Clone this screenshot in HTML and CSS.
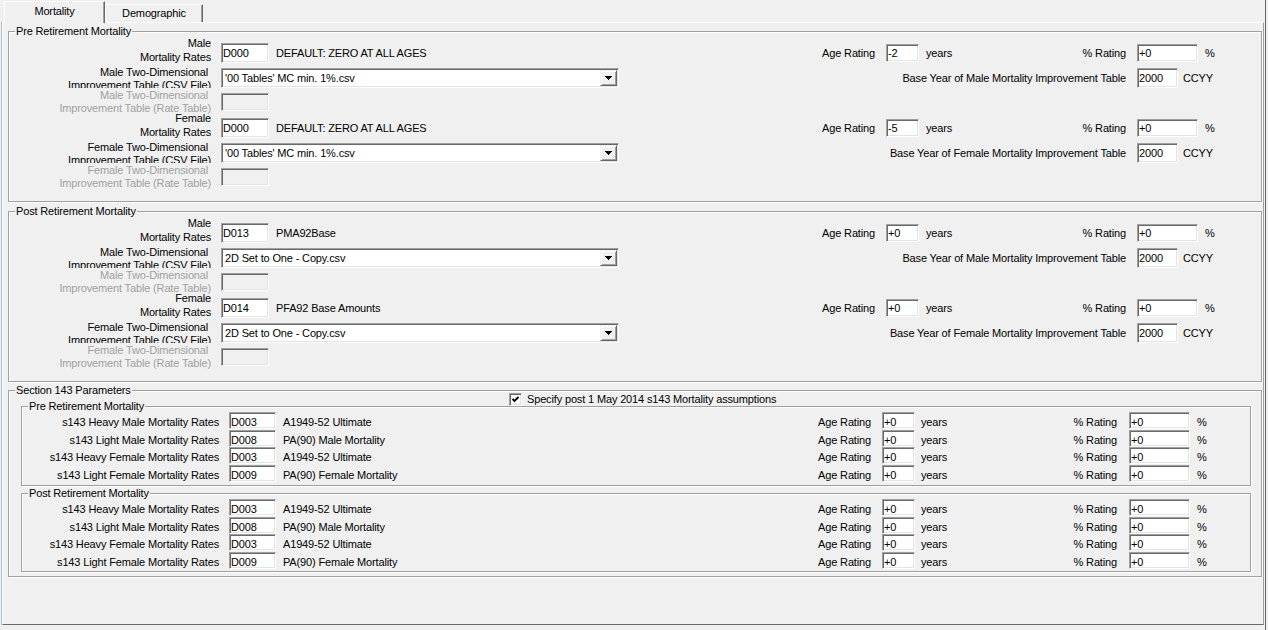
FILE: index.html
```html
<!DOCTYPE html>
<html>
<head>
<meta charset="utf-8">
<title>Mortality</title>
<link rel="stylesheet" href="styles.css">
</head>
<body>
<div class="window">
  <div class="tabs">
    <div class="tab active">Mortality</div>
    <div class="tab">Demographic</div>
  </div>
  <div class="panel">

    <div class="group g-pre">
      <span class="legend">Pre Retirement Mortality</span>
      <div class="row">
        <div class="lbl lbl-mr">Male<br>Mortality Rates</div>
        <div class="field code">D000</div>
        <div class="desc">DEFAULT: ZERO AT ALL AGES</div>
        <div class="cluster">
          <span class="c-age">Age Rating</span>
          <span class="field f-age">-2</span>
          <span class="c-years">years</span>
          <span class="c-pct">% Rating</span>
          <span class="field f-pct">+0</span>
          <span class="c-unit">%</span>
        </div>
      </div>
      <div class="row">
        <div class="lbl lbl-csv">Male Two-Dimensional&nbsp;<br>Improvement Table (CSV File)</div>
        <div class="combo"><span class="combo-text">'00 Tables' MC min. 1%.csv</span><span class="combo-btn"><svg width="7" height="4" viewBox="0 0 7 4" shape-rendering="crispEdges"><path d="M0 0h7v1h-1v1h-1v1h-1v1h-1v-1h-1v-1h-1v-1h-1z" fill="#000"/></svg></span></div>
        <div class="cluster">
          <span class="c-base">Base Year of Male Mortality Improvement Table</span>
          <span class="field f-year">2000</span>
          <span class="c-ccyy">CCYY</span>
        </div>
      </div>
      <div class="row">
        <div class="lbl lbl-rate">Male Two-Dimensional&nbsp;<br>Improvement Table (Rate Table)</div>
        <div class="field disabled"></div>
      </div>
      <div class="row">
        <div class="lbl lbl-mr">Female<br>Mortality Rates</div>
        <div class="field code">D000</div>
        <div class="desc">DEFAULT: ZERO AT ALL AGES</div>
        <div class="cluster">
          <span class="c-age">Age Rating</span>
          <span class="field f-age">-5</span>
          <span class="c-years">years</span>
          <span class="c-pct">% Rating</span>
          <span class="field f-pct">+0</span>
          <span class="c-unit">%</span>
        </div>
      </div>
      <div class="row">
        <div class="lbl lbl-csv">Female Two-Dimensional&nbsp;<br>Improvement Table (CSV File)</div>
        <div class="combo"><span class="combo-text">'00 Tables' MC min. 1%.csv</span><span class="combo-btn"><svg width="7" height="4" viewBox="0 0 7 4" shape-rendering="crispEdges"><path d="M0 0h7v1h-1v1h-1v1h-1v1h-1v-1h-1v-1h-1v-1h-1z" fill="#000"/></svg></span></div>
        <div class="cluster">
          <span class="c-base">Base Year of Female Mortality Improvement Table</span>
          <span class="field f-year">2000</span>
          <span class="c-ccyy">CCYY</span>
        </div>
      </div>
      <div class="row">
        <div class="lbl lbl-rate">Female Two-Dimensional&nbsp;<br>Improvement Table (Rate Table)</div>
        <div class="field disabled"></div>
      </div>
    </div>

    <div class="group g-post">
      <span class="legend">Post Retirement Mortality</span>
      <div class="row">
        <div class="lbl lbl-mr">Male<br>Mortality Rates</div>
        <div class="field code">D013</div>
        <div class="desc">PMA92Base</div>
        <div class="cluster">
          <span class="c-age">Age Rating</span>
          <span class="field f-age">+0</span>
          <span class="c-years">years</span>
          <span class="c-pct">% Rating</span>
          <span class="field f-pct">+0</span>
          <span class="c-unit">%</span>
        </div>
      </div>
      <div class="row">
        <div class="lbl lbl-csv">Male Two-Dimensional&nbsp;<br>Improvement Table (CSV File)</div>
        <div class="combo"><span class="combo-text">2D Set to One - Copy.csv</span><span class="combo-btn"><svg width="7" height="4" viewBox="0 0 7 4" shape-rendering="crispEdges"><path d="M0 0h7v1h-1v1h-1v1h-1v1h-1v-1h-1v-1h-1v-1h-1z" fill="#000"/></svg></span></div>
        <div class="cluster">
          <span class="c-base">Base Year of Male Mortality Improvement Table</span>
          <span class="field f-year">2000</span>
          <span class="c-ccyy">CCYY</span>
        </div>
      </div>
      <div class="row">
        <div class="lbl lbl-rate">Male Two-Dimensional&nbsp;<br>Improvement Table (Rate Table)</div>
        <div class="field disabled"></div>
      </div>
      <div class="row">
        <div class="lbl lbl-mr">Female<br>Mortality Rates</div>
        <div class="field code">D014</div>
        <div class="desc">PFA92 Base Amounts</div>
        <div class="cluster">
          <span class="c-age">Age Rating</span>
          <span class="field f-age">+0</span>
          <span class="c-years">years</span>
          <span class="c-pct">% Rating</span>
          <span class="field f-pct">+0</span>
          <span class="c-unit">%</span>
        </div>
      </div>
      <div class="row">
        <div class="lbl lbl-csv">Female Two-Dimensional&nbsp;<br>Improvement Table (CSV File)</div>
        <div class="combo"><span class="combo-text">2D Set to One - Copy.csv</span><span class="combo-btn"><svg width="7" height="4" viewBox="0 0 7 4" shape-rendering="crispEdges"><path d="M0 0h7v1h-1v1h-1v1h-1v1h-1v-1h-1v-1h-1v-1h-1z" fill="#000"/></svg></span></div>
        <div class="cluster">
          <span class="c-base">Base Year of Female Mortality Improvement Table</span>
          <span class="field f-year">2000</span>
          <span class="c-ccyy">CCYY</span>
        </div>
      </div>
      <div class="row">
        <div class="lbl lbl-rate">Female Two-Dimensional&nbsp;<br>Improvement Table (Rate Table)</div>
        <div class="field disabled"></div>
      </div>
    </div>

    <div class="group g-s143">
      <span class="legend">Section 143 Parameters</span>
      <div class="chkrow">
        <span class="chk"><svg width="9" height="9" viewBox="0 0 9 9"><polyline points="1.5,4 3.5,6 7.5,2" fill="none" stroke="#000" stroke-width="1.8"/></svg></span>
        <span class="chk-text">Specify post 1 May 2014 s143 Mortality assumptions</span>
      </div>

      <div class="group inner i-pre">
        <span class="legend">Pre Retirement Mortality</span>
        <div class="irow">
          <div class="ilbl">s143 Heavy Male Mortality Rates</div>
          <div class="field icode">D003</div>
          <div class="idesc">A1949-52 Ultimate</div>
          <div class="icluster">
            <span class="c-age">Age Rating</span><span class="field f-age">+0</span><span class="c-years">years</span><span class="c-pct">% Rating</span><span class="field f-pct">+0</span><span class="c-unit">%</span>
          </div>
        </div>
        <div class="irow">
          <div class="ilbl">s143 Light Male Mortality Rates</div>
          <div class="field icode">D008</div>
          <div class="idesc">PA(90) Male Mortality</div>
          <div class="icluster">
            <span class="c-age">Age Rating</span><span class="field f-age">+0</span><span class="c-years">years</span><span class="c-pct">% Rating</span><span class="field f-pct">+0</span><span class="c-unit">%</span>
          </div>
        </div>
        <div class="irow">
          <div class="ilbl">s143 Heavy Female Mortality Rates</div>
          <div class="field icode">D003</div>
          <div class="idesc">A1949-52 Ultimate</div>
          <div class="icluster">
            <span class="c-age">Age Rating</span><span class="field f-age">+0</span><span class="c-years">years</span><span class="c-pct">% Rating</span><span class="field f-pct">+0</span><span class="c-unit">%</span>
          </div>
        </div>
        <div class="irow">
          <div class="ilbl">s143 Light Female Mortality Rates</div>
          <div class="field icode">D009</div>
          <div class="idesc">PA(90) Female Mortality</div>
          <div class="icluster">
            <span class="c-age">Age Rating</span><span class="field f-age">+0</span><span class="c-years">years</span><span class="c-pct">% Rating</span><span class="field f-pct">+0</span><span class="c-unit">%</span>
          </div>
        </div>
      </div>

      <div class="group inner i-post">
        <span class="legend">Post Retirement Mortality</span>
        <div class="irow">
          <div class="ilbl">s143 Heavy Male Mortality Rates</div>
          <div class="field icode">D003</div>
          <div class="idesc">A1949-52 Ultimate</div>
          <div class="icluster">
            <span class="c-age">Age Rating</span><span class="field f-age">+0</span><span class="c-years">years</span><span class="c-pct">% Rating</span><span class="field f-pct">+0</span><span class="c-unit">%</span>
          </div>
        </div>
        <div class="irow">
          <div class="ilbl">s143 Light Male Mortality Rates</div>
          <div class="field icode">D008</div>
          <div class="idesc">PA(90) Male Mortality</div>
          <div class="icluster">
            <span class="c-age">Age Rating</span><span class="field f-age">+0</span><span class="c-years">years</span><span class="c-pct">% Rating</span><span class="field f-pct">+0</span><span class="c-unit">%</span>
          </div>
        </div>
        <div class="irow">
          <div class="ilbl">s143 Heavy Female Mortality Rates</div>
          <div class="field icode">D003</div>
          <div class="idesc">A1949-52 Ultimate</div>
          <div class="icluster">
            <span class="c-age">Age Rating</span><span class="field f-age">+0</span><span class="c-years">years</span><span class="c-pct">% Rating</span><span class="field f-pct">+0</span><span class="c-unit">%</span>
          </div>
        </div>
        <div class="irow">
          <div class="ilbl">s143 Light Female Mortality Rates</div>
          <div class="field icode">D009</div>
          <div class="idesc">PA(90) Female Mortality</div>
          <div class="icluster">
            <span class="c-age">Age Rating</span><span class="field f-age">+0</span><span class="c-years">years</span><span class="c-pct">% Rating</span><span class="field f-pct">+0</span><span class="c-unit">%</span>
          </div>
        </div>
      </div>
    </div>

  </div>
</div>
</body>
</html>
```

FILE: styles.css
```css
html, body {
  margin: 0;
  padding: 0;
  background: #f0f0f0;
}
body {
  font-family: "Liberation Sans", Arial, sans-serif;
  font-size: 11px;
  letter-spacing: -0.15px;
  color: #000;
}
.window {
  width: 1266px;
  height: 630px;
  box-sizing: border-box;
  padding-left: 2px;
  border-right: 1px solid #696969;
  overflow: hidden;
}

/* Tabs */
.tabs {
  display: flex;
  align-items: flex-end;
  height: 22px;
  padding-left: 2px;
}
.tab {
  box-sizing: border-box;
  height: 18px;
  width: 98px;
  border-top: 1px solid #fff;
  border-left: 1px solid #fff;
  border-right: 1px solid #696969;
  box-shadow: inset -1px 0 0 #a0a0a0;
  text-align: center;
  line-height: 13px;
  padding-top: 2px;
  white-space: nowrap;
}
.tab.active {
  width: 101px;
  height: 22px;
  padding-top: 3px;
  position: relative;
  top: 1px;
  z-index: 1;
  background: #f0f0f0;
}

/* Panel */
.panel {
  box-sizing: border-box;
  width: 1262px;
  height: 603px;
  border-top: 1px solid #fff;
  border-left: 1px solid #fff;
  border-right: 1px solid #a0a0a0;
  border-bottom: 1px solid #696969;
  box-shadow: -1px 0 0 #aabbd0;
  padding-top: 8px;
}

/* Group boxes */
.group {
  position: relative;
  border: 1px solid #a0a0a0;
  box-shadow: inset 1px 1px 0 #fff, 1px 1px 0 #fff;
  margin: 0 1px 0 5px;
  padding: 11px 0 8px;
}
.g-post { margin-top: 9px; }
.g-s143 { margin-top: 8px; padding: 2px 0 0; }
.legend {
  position: absolute;
  top: -7px;
  left: 6px;
  padding: 0 1px;
  background: #f0f0f0;
  line-height: 13px;
  white-space: nowrap;
}
.group.inner {
  margin: 0 10px 0 12px;
  padding: 5px 0 3px;
}
.group.i-post {
  margin-top: 7px;
  margin-bottom: 4px;
  padding-bottom: 2px;
}

/* Fields */
.field {
  box-sizing: border-box;
  display: block;
  flex: none;
  background: #fff;
  border: 1px solid;
  border-color: #a0a0a0 #fff #fff #a0a0a0;
  box-shadow: inset 1px 1px 0 #696969, inset -1px -1px 0 #e3e3e3;
  padding-left: 1px;
  white-space: nowrap;
}
.field.disabled {
  width: 48px;
  height: 18px;
  background: #f0f0f0;
}

/* Outer rows */
.row {
  display: flex;
  align-items: flex-start;
  height: 25px;
}
.lbl {
  flex: none;
  width: 202px;
  margin-right: 10px;
  text-align: right;
  white-space: nowrap;
}
.lbl-mr {
  line-height: 13.5px;
  margin-top: -6px;
}
.lbl-csv {
  line-height: 13px;
  margin-top: -2px;
  height: 22px;
  overflow: hidden;
}
.lbl-rate {
  line-height: 12.5px;
  margin-top: -4px;
  color: #a0a0a0;
}
.code {
  width: 48px;
  height: 20px;
  line-height: 18px;
}
.desc {
  margin-left: 7px;
  line-height: 20px;
  white-space: nowrap;
}

.combo {
  box-sizing: border-box;
  flex: none;
  display: flex;
  width: 398px;
  height: 20px;
  background: #fff;
  border: 1px solid;
  border-color: #a0a0a0 #fff #fff #a0a0a0;
  box-shadow: inset 1px 1px 0 #696969, inset -1px -1px 0 #e3e3e3;
  padding: 1px;
}
.combo-text {
  flex: 1;
  padding-left: 2px;
  padding-top: 1px;
  line-height: 15px;
  white-space: nowrap;
}
.combo-btn {
  box-sizing: border-box;
  width: 17px;
  height: 16px;
  display: flex;
  align-items: center;
  justify-content: center;
  background: #f0f0f0;
  border: 1px solid;
  border-color: #f0f0f0 #696969 #696969 #f0f0f0;
  box-shadow: inset 1px 1px 0 #fff, inset -1px -1px 0 #a0a0a0;
}
.combo-btn svg {
  display: block;
}

/* Right-hand cluster (outer) */
.cluster {
  flex: none;
  margin-left: auto;
  width: 485px;
  height: 20px;
  display: flex;
  align-items: center;
  line-height: 20px;
  white-space: nowrap;
}
.c-age {
  width: 99px;
  margin-right: 11px;
  text-align: right;
}
.f-age {
  width: 33px;
  height: 18px;
  line-height: 16px;
  margin-right: 7px;
}
.c-years {
  width: 40px;
}
.c-pct {
  width: 160px;
  margin-right: 11px;
  text-align: right;
}
.f-pct {
  width: 61px;
  height: 18px;
  line-height: 16px;
  margin-right: 7px;
}
.c-unit {
  flex: 1;
}
.c-base {
  width: 350px;
  margin-right: 11px;
  text-align: right;
}
.f-year {
  width: 41px;
  height: 20px;
  line-height: 18px;
  margin-right: 5px;
}
.c-ccyy {
  flex: 1;
}

/* Checkbox row */
.chkrow {
  display: flex;
  align-items: flex-start;
  height: 13px;
  padding-left: 500px;
}
.chk {
  box-sizing: border-box;
  width: 13px;
  height: 13px;
  display: flex;
  align-items: center;
  justify-content: center;
  background: #fff;
  border: 1px solid;
  border-color: #a0a0a0 #fff #fff #a0a0a0;
  box-shadow: inset 1px 1px 0 #696969, inset -1px -1px 0 #e3e3e3;
}
.chk svg { display: block; }
.chk-text {
  margin-left: 5px;
  line-height: 13px;
  white-space: nowrap;
}

/* Inner rows (s143) */
.irow {
  display: flex;
  align-items: flex-start;
  height: 17.5px;
  line-height: 21px;
  white-space: nowrap;
}
.ilbl {
  flex: none;
  width: 197px;
  margin-right: 10px;
  text-align: right;
}
.icode {
  width: 47px;
  height: 17px;
  line-height: 15px;
  padding-top: 2px;
}
.idesc {
  margin-left: 7px;
}
.icluster {
  flex: none;
  margin-left: auto;
  width: 478px;
  display: flex;
  align-items: flex-start;
}
.icluster .c-age { width: 99px; margin-right: 11px; }
.icluster .f-age,
.icluster .f-pct {
  height: 17px;
  line-height: 15px;
  padding-top: 2px;
}
.icluster .f-age { margin-right: 6px; }
.icluster .c-pct { width: 156px; margin-right: 12px; }
```
